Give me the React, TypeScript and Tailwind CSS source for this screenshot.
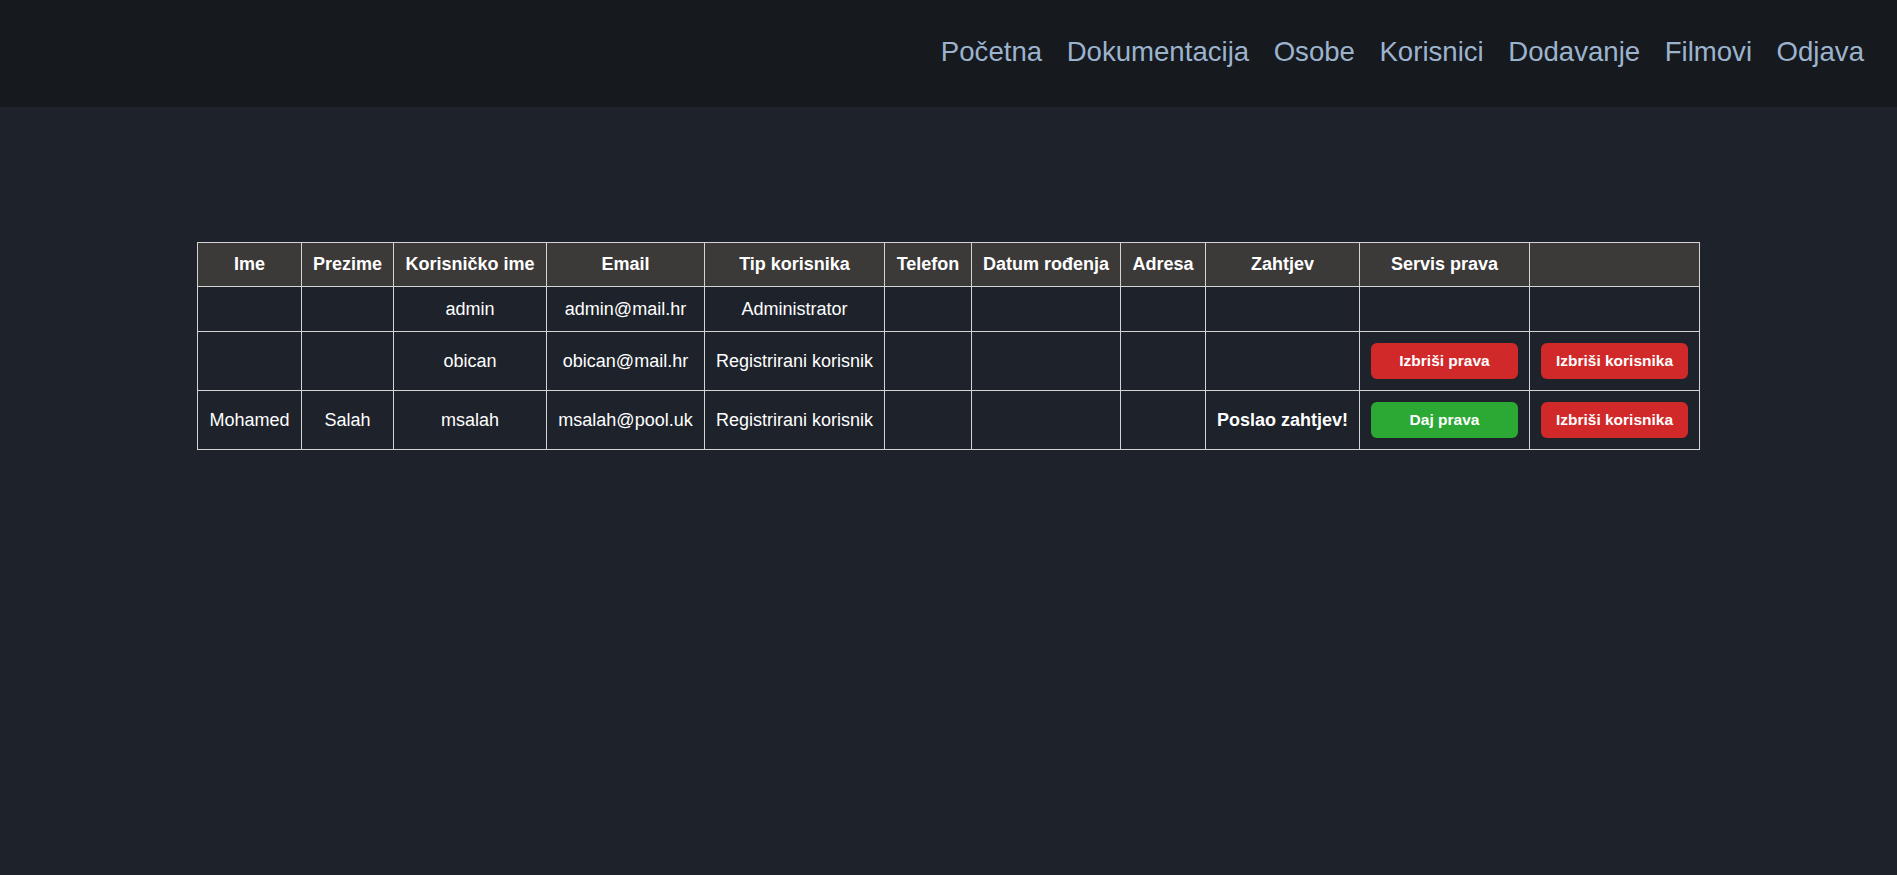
import React from 'react';

const NAV = ['Početna', 'Dokumentacija', 'Osobe', 'Korisnici', 'Dodavanje', 'Filmovi', 'Odjava'];

const COLUMNS = [
  { label: 'Ime', width: 'w-[104px]' },
  { label: 'Prezime', width: 'w-[92px]' },
  { label: 'Korisničko ime', width: 'w-[153px]' },
  { label: 'Email', width: 'w-[158px]' },
  { label: 'Tip korisnika', width: 'w-[180px]' },
  { label: 'Telefon', width: 'w-[87px]' },
  { label: 'Datum rođenja', width: 'w-[149px]' },
  { label: 'Adresa', width: 'w-[85px]' },
  { label: 'Zahtjev', width: 'w-[154px]' },
  { label: 'Servis prava', width: 'w-[170px]' },
  { label: '', width: 'w-[170px]' },
];

type User = {
  ime: string;
  prezime: string;
  username: string;
  email: string;
  tip: string;
  zahtjev: boolean;
  action: 'none' | 'revoke' | 'grant';
};

const USERS: User[] = [
  { ime: '', prezime: '', username: 'admin', email: 'admin@mail.hr', tip: 'Administrator', zahtjev: false, action: 'none' },
  { ime: '', prezime: '', username: 'obican', email: 'obican@mail.hr', tip: 'Registrirani korisnik', zahtjev: false, action: 'revoke' },
  { ime: 'Mohamed', prezime: 'Salah', username: 'msalah', email: 'msalah@pool.uk', tip: 'Registrirani korisnik', zahtjev: true, action: 'grant' },
];

function Btn({ color, children }: { color: 'red' | 'green'; children: React.ReactNode }) {
  return (
    <button
      className={`w-full h-[36px] rounded-[6px] text-white font-bold text-[15.5px] whitespace-nowrap ${
        color === 'red' ? 'bg-[#d1292a]' : 'bg-[#2ca835]'
      }`}
    >
      {children}
    </button>
  );
}

export default function App() {
  const td = 'border border-[#d4d4d4] px-[11px] py-[11px] text-center leading-[22px]';

  return (
    <div className="min-h-screen bg-[#1e232b] font-['Liberation_Sans',Arial,sans-serif] text-white">
      {/* Top nav */}
      <nav className="h-[107px] bg-[#16191e] flex items-center justify-end pr-[33px] pb-[2px]">
        <ul className="flex gap-[24.5px]">
          {NAV.map(n => (
            <li key={n}>
              <a href="#" className="text-[27.6px] text-[#9cb3cd] leading-none">{n}</a>
            </li>
          ))}
        </ul>
      </nav>

      {/* Users table */}
      <div className="flex justify-center pt-[135px]">
        <table className="table-fixed border-collapse text-[18px] w-[1503px]">
          <thead>
            <tr>
              {COLUMNS.map((c, i) => (
                <th
                  key={i}
                  className={`${c.width} border border-[#d4d4d4] bg-[#3c3939] px-[11px] py-[11px] leading-[21px] font-bold text-center whitespace-nowrap`}
                >
                  {c.label}
                </th>
              ))}
            </tr>
          </thead>
          <tbody>
            {USERS.map(u => (
              <tr key={u.username}>
                <td className={td}>{u.ime}</td>
                <td className={td}>{u.prezime}</td>
                <td className={td}>{u.username}</td>
                <td className={td}>{u.email}</td>
                <td className={`${td} whitespace-nowrap`}>{u.tip}</td>
                <td className={td}></td>
                <td className={td}></td>
                <td className={td}></td>
                <td className={`${td} font-bold whitespace-nowrap`}>{u.zahtjev ? 'Poslao zahtjev!' : ''}</td>
                <td className={td}>
                  {u.action === 'revoke' && <Btn color="red">Izbriši prava</Btn>}
                  {u.action === 'grant' && <Btn color="green">Daj prava</Btn>}
                </td>
                <td className={td}>
                  {u.action !== 'none' && <Btn color="red">Izbriši korisnika</Btn>}
                </td>
              </tr>
            ))}
          </tbody>
        </table>
      </div>
    </div>
  );
}
